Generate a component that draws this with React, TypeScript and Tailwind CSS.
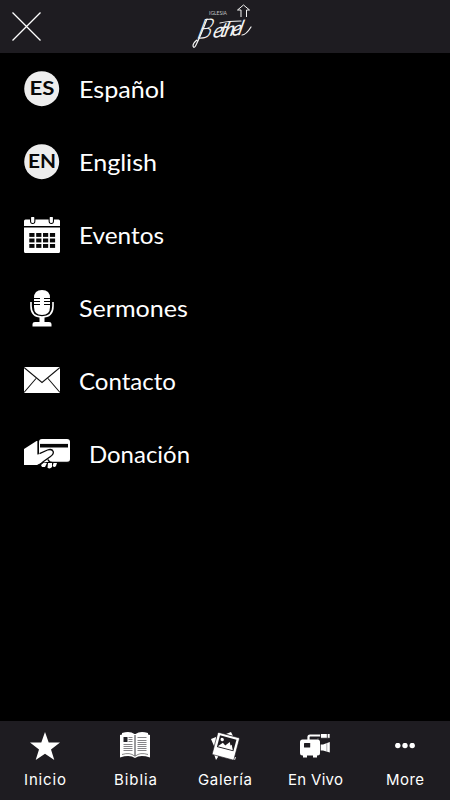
import type { ReactNode } from 'react';

const Language = ({ code }: { code: string }) => (
  <svg width="36" height="36" viewBox="0 0 36 36">
    <circle cx="17.700" cy="17.700" r="17.500" fill="#ededed" />
    <text x={code === 'ES' ? 5.500 : 4} y="24" textLength={code === 'ES' ? 25 : 28} lengthAdjust="spacingAndGlyphs" fontSize="19.500" className="font-['Lato',sans-serif] font-bold" fill="#080808">{code}</text>
  </svg>
);

const Calendar = () => (
  <svg width="36" height="36" viewBox="0 0 36 36">
    <path d="M1.500 2.500H34.500Q36 2.500 36 4V9H0V4Q0 2.500 1.500 2.500ZM0 10.500H36V34.500Q36 36 34.500 36H1.500Q0 36 0 34.500Z" fill="#fff" />
    <path d="M6 0V4Q6 7 8.700 7T11.400 4V0M24.600 0V4Q24.600 7 27.300 7T30 4V0" fill="#000" />
    <path d="M8.700 1V4.500M27.300 1V4.500" stroke="#fff" strokeWidth="3.200" strokeLinecap="round" />
    {[16, 21.500, 27].map((y) => [5.300, 12.200, 19, 25.900].map((x) => (
      <rect key={`${x}-${y}`} x={x} y={y} width="5.200" height="3.900" fill="#080808" />
    )))}
  </svg>
);

const Microphone = () => (
  <svg width="36" height="37" viewBox="0 0 36 37">
    <path d="M10 8Q10 0 18 0T26 8V17Q26 25 18 25T10 17Z" fill="#fff" />
    <path d="M10 8.500H16M20 8.500H26M10 11.500H16M20 11.500H26M10 14.500H16M20 14.500H26" stroke="#000" strokeWidth="1" />
    <path d="M7 12V16Q7 27 18 27T29 16V12" fill="none" stroke="#fff" strokeWidth="1.600" />
    <path d="M15.500 27H20.500V32H25Q27.500 32 27.500 34V36.500H8.500V34Q8.500 32 11 32H15.500Z" fill="#fff" />
  </svg>
);

const Envelope = () => (
  <svg width="36" height="26" viewBox="0 0 36 26" className="mb-0.5">
    <path d="M0 0H36V26H0Z" fill="#fff" />
    <path d="M0 .5 18 15.500 36 .5M0 25.500 12 11.500M36 25.500 24 11.500" fill="none" stroke="#111" strokeWidth="1.050" />
  </svg>
);

const Donation = () => (
  <svg width="46" height="30" viewBox="0 0 46 30">
    <rect x="15" y="0" width="31" height="23" rx="3" fill="#fff" />
    <path d="M16 4.900H44V8.500H16Z" fill="#080808" />
    <path d="M0 10 12.500 2 14 2V15L24 10.700Q27 9.500 29 11Q31 13 28 16L21 21Q17 25 13 26H0Z" fill="#fff" />
    <path d="M14 1V15.500M15.500 14.700 23.500 11Q28 9.500 29.200 12.500Q30 15 26.500 17.500L19.500 22.500Q17 25.500 14 26.500M24 20.500Q25 23.700 29 23.500H46" fill="none" stroke="#080808" strokeWidth="1.300" />
    <path d="M17 26 20 23.500 23 24 21 28 18 28ZM24 24H28V28Q26 30.500 23.500 28.800ZM29.500 24H33L32 27Q30.500 29 28.700 27Z" fill="#fff" />
  </svg>
);

const Star = () => (
  <svg width="30" height="29" viewBox="0 0 30 29">
    <path d="m15 0 3.700 10.500H30L21 17.500 24.300 28 15 21.700 5.700 28 9 17.500 0 10.500H11.300Z" fill="#fff" />
  </svg>
);

const Book = () => (
  <svg width="30" height="28" viewBox="0 0 30 28">
    <path d="M0 3 2 2.500V1Q10-1.300 14.500 2H15.500Q20-1.300 28 1V2.500L30 3V25.500Q20 22.500 15 26Q10 22.500 0 25.500Z" fill="#fff" />
    <path d="M2 22.500Q10 20 14.500 24H15.500Q20 20 28 22.500" fill="none" stroke="#555" strokeWidth=".7" />
    <path d="M15 3V24" stroke="#35343a" strokeWidth="1" />
    <path d="M3.500 5H7.500V10H3.500Z" fill="#202026" />
    <path d="M8.500 5.500H12.500M8.500 7.500H12.500M8.500 9.500H12.500M3.500 12.500H12.500M3.500 14.500H12.500M3.500 16.500H12.500M3.500 18.500H12.500M17.500 5.500H26.500M17.500 8.500H26.500M17.500 10.500H26.500M17.500 12.500H26.500M17.500 14.500H26.500M17.500 16.500H26.500M17.500 18.500H26.500" fill="none" stroke="#77767b" strokeWidth=".9" />
  </svg>
);

const Gallery = () => (
  <svg width="30" height="29" viewBox="0 0 30 29">
    <path d="m1 7 5-2L8 25 6 28 4 22 5 20 4 14ZM16 2 21 0 23 4M20 26 26 25 25 28Z" fill="#fff" />
    <g transform="rotate(15 15 14.500)">
      <rect x="4.500" y="2.500" width="22.500" height="23" rx="1" fill="#fff" stroke="#1e1c21" strokeWidth=".6" />
      <rect x="7.300" y="5" width="17" height="12" fill="#1e1c21" />
      <circle cx="10.500" cy="8.500" r="1.700" fill="#fff" />
      <path d="m8 16 4-4.500 3 2 3.500-4.500L20 12l1-1 2.500 5Z" fill="#fff" />
    </g>
  </svg>
);

const Camera = () => (
  <svg width="30" height="24" viewBox="0 0 30 24">
    <path d="M8.500 6V3Q8.500 1.500 10 1.500H21" fill="none" stroke="#fff" strokeWidth="2.200" />
    <path d="M18 4V6M21 0H29.500V3.800H21Z" fill="#fff" stroke="#fff" strokeWidth=".3" />
    <path d="M20.500 0V4M27.300 0V4" stroke="#1e1c21" strokeWidth=".8" />
    <rect x="0" y="5.500" width="20" height="16" rx="2.500" fill="#fff" />
    <rect x="4" y="9" width="6.200" height="4.500" rx=".6" fill="#1e1c21" />
    <path d="M19 10.500H24V16.500H19ZM23 10.500 29.800 8V18.500L23 16.500ZM3 21H7V23.500H3ZM13 21H17V23.500H13Z" fill="#fff" />
    <path d="M20.500 8V20" stroke="#1e1c21" strokeWidth=".7" />
    <path d="M26.800 9V18" stroke="#77757a" strokeWidth=".6" />
  </svg>
);

const More = () => (
  <svg width="20" height="6" viewBox="0 0 20 6"><g fill="#fff"><circle cx="2.800" cy="2.500" r="2.700" /><circle cx="10" cy="2.500" r="2.700" /><circle cx="17.200" cy="2.500" r="2.700" /></g></svg>
);

const Logo = () => (
  <svg width="70" height="53" viewBox="0 0 70 53" className="absolute left-[188px] top-0 overflow-visible">
    <text x="21" y="15" textLength="18" lengthAdjust="spacingAndGlyphs" fontSize="5.500" fill="#c4c4c7" className="font-['Lato',sans-serif]">IGLESIA</text>
    <g fill="#f4f4f4" className="font-['Lato',sans-serif] italic">
      <text transform="translate(8 39) rotate(-5) skewX(-20)" x="0" y="0" textLength="15" lengthAdjust="spacingAndGlyphs" fontSize="27" className="font-light">B</text>
      <text transform="translate(24 38) rotate(-6) skewX(-20)" x="0" y="0" textLength="30" lengthAdjust="spacing" fontSize="20">ethel</text>
    </g>
    <path d="M19 19Q13 35 8 45Q6 49 5 46Q5 43 9 40M32 23Q40 21 53 21M54 35Q58 35 63 27" fill="none" stroke="#f4f4f4" strokeWidth="1.200" strokeLinecap="round" />
    <path d="M53 17V10H49.500L55.500 5 61.500 10H58.500V17" fill="none" stroke="#f4f4f4" strokeWidth="1" />
  </svg>
);

type MenuItem = { label: string; icon: ReactNode; width: number };

const menu: MenuItem[] = [
  { label: 'Español', icon: <Language code="ES" />, width: 86 },
  { label: 'English', icon: <Language code="EN" />, width: 78 },
  { label: 'Eventos', icon: <Calendar />, width: 85 },
  { label: 'Sermones', icon: <Microphone />, width: 109 },
  { label: 'Contacto', icon: <Envelope />, width: 97 },
  { label: 'Donación', icon: <Donation />, width: 101 },
];

const tabs: MenuItem[] = [
  { label: 'Inicio', icon: <Star />, width: 42 },
  { label: 'Biblia', icon: <Book />, width: 43 },
  { label: 'Galería', icon: <Gallery />, width: 54 },
  { label: 'En Vivo', icon: <Camera />, width: 55 },
  { label: 'More', icon: <More />, width: 38 },
];

export default function App() {
  return (
    <main className="flex h-[800px] w-[450px] flex-col overflow-hidden bg-black text-white">
      <header className="relative h-[53px] shrink-0 bg-[#1e1c21]">
        <button aria-label="Cerrar" className="ml-3 mt-3 block">
          <svg width="29" height="29" viewBox="0 0 29 29"><path d="m.5.5 28 28M28.500.5l-28 28" stroke="#fff" strokeWidth="1.300" /></svg>
        </button>
        <Logo />
      </header>
      <nav className="flex flex-1 flex-col">
        {menu.map(({ label, icon, width }) => (
          <a key={label} className="flex h-[73px] items-center gap-[19px] pb-px pl-6">
            {icon}
            <svg width="120" height="32" className="overflow-visible"><text x="0" y="25" textLength={width} lengthAdjust="spacingAndGlyphs" fontSize="23" fill="#fff" className="font-['Lato',sans-serif]">{label}</text></svg>
          </a>
        ))}
      </nav>
      <footer className="grid h-[79px] shrink-0 grid-cols-5 bg-[#1e1c21]">
        {tabs.map(({ label, icon, width }) => (
          <a key={label} className="flex flex-col items-center pt-[9px]">
            <span className="flex h-8 items-center justify-center">{icon}</span>
            <svg width={width + 2} height="24" className="mt-1.5 overflow-visible"><text x="1" y="17" textLength={width} lengthAdjust="spacing" fontSize="15" fill="#fff" className="font-['Inter',sans-serif]">{label}</text></svg>
          </a>
        ))}
      </footer>
    </main>
  );
}
